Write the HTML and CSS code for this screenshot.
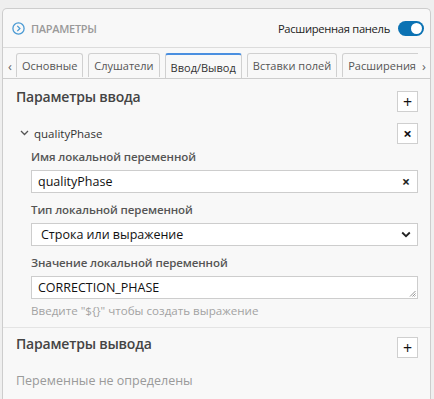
FILE: index.html
```html
<!DOCTYPE html>
<html lang="ru">
<head>
<meta charset="utf-8">
<link rel="stylesheet" href="styles.css">
</head>
<body>
<div class="panel">
  <div class="header">
    <svg class="hicon" width="13" height="13" viewBox="0 0 13 13"><circle cx="6.5" cy="6.5" r="5.6" fill="none" stroke="#4a9ad4" stroke-width="1.3"/><path d="M5.3 3.9 L7.9 6.5 L5.3 9.1" fill="none" stroke="#4a9ad4" stroke-width="1.3"/></svg>
    <span class="htitle">ПАРАМЕТРЫ</span>
    <span class="spacer"></span>
    <span class="hlabel">Расширенная панель</span>
    <span class="toggle"><span class="knob"></span></span>
  </div>
  <div class="tabs">
    <span class="arrow">‹</span>
    <div class="tablist">
      <span class="tab">Основные</span>
      <span class="tab">Слушатели</span>
      <span class="tab active">Ввод/Вывод</span>
      <span class="tab">Вставки полей</span>
      <span class="tab">Расширения</span>
    </div>
    <span class="arrow">›</span>
  </div>
  <div class="section">
    <div class="shead">
      <span class="stitle">Параметры ввода</span>
      <span class="btn">+</span>
    </div>
    <div class="item">
      <svg class="chev" width="9" height="6" viewBox="0 0 9 6"><path d="M1 1 L4.5 4.5 L8 1" fill="none" stroke="#555" stroke-width="1.3"/></svg>
      <span class="iname">qualityPhase</span>
      <span class="btn x">×</span>
    </div>
    <div class="fields">
      <div class="field">
        <label class="flabel">Имя локальной переменной</label>
        <div class="input"><span>qualityPhase</span><span class="clear">×</span></div>
      </div>
      <div class="field">
        <label class="flabel">Тип локальной переменной</label>
        <div class="select"><span>Строка или выражение</span>
          <svg width="10" height="7" viewBox="0 0 10 7"><path d="M1.2 1.5 L5 5.2 L8.8 1.5" fill="none" stroke="#222" stroke-width="1.8"/></svg>
        </div>
      </div>
      <div class="field">
        <label class="flabel">Значение локальной переменной</label>
        <div class="textarea"><span>CORRECTION_PHASE</span>
          <svg class="grip" width="7" height="7" viewBox="0 0 7 7"><path d="M6.5 1 L1 6.5 M6.5 3.5 L3.5 6.5 M6.5 5.5 L5.5 6.5" stroke="#888" stroke-width="0.9"/></svg>
        </div>
        <div class="hint">Введите "${}" чтобы создать выражение</div>
      </div>
    </div>
  </div>
  <div class="section out">
    <div class="shead">
      <span class="stitle">Параметры вывода</span>
      <span class="btn">+</span>
    </div>
    <div class="empty">Переменные не определены</div>
  </div>
</div>
</body>
</html>
```
FILE: styles.css
```css
* { box-sizing: border-box; }
html, body { margin: 0; height: 100%; overflow: hidden; }
body {
  background: #efefef;
  font-family: "Open Sans", "Noto Sans", sans-serif;
  font-size: 12.5px;
  color: #333;
}
.panel {
  margin: 8px 3px 0 2px;
  border: 1px solid #cdcdcd;
  border-bottom: none;
  border-radius: 5px 5px 0 0;
  background: #f8f8f8;
  height: 400px;
}
.header {
  height: 39px;
  display: flex;
  align-items: center;
  padding: 0 6px 0 9px;
  border-bottom: 1px solid #dcdcdc;
}
.hicon { display: block; margin-right: 6px; }
.htitle { color: #9a9a9a; font-size: 11px; font-weight: 600; letter-spacing: -0.3px; }
.spacer { flex: 1; }
.hlabel { color: #222; font-size: 11.2px; letter-spacing: -0.3px; margin-right: 8px; }
.toggle {
  width: 26px; height: 15px; border-radius: 8px; background: #0b72b3;
  position: relative; display: block;
}
.knob {
  position: absolute; right: 2px; top: 2px; width: 11px; height: 11px;
  border-radius: 50%; background: #fff;
}
.tabs {
  display: flex;
  align-items: flex-end;
  padding-top: 6px;
  border-bottom: 1px solid #cdcdcd;
  height: 31px;
}
.arrow { width: 13px; text-align: center; color: #666; font-size: 13px; line-height: 24px; padding-left: 1px; }
.arrow:last-child { width: 12px; padding-left: 0; }
.tablist { flex: 1; display: flex; gap: 5px; overflow: hidden; }
.tab {
  flex: none;
  height: 24px;
  line-height: 23px;
  padding: 0 5px;
  border: 1px solid #d0d0d0;
  border-bottom: none;
  border-radius: 3px 3px 0 0;
  color: #555;
  font-size: 11px;
  background: #f8f8f8;
}
.tab.active {
  height: 26px;
  line-height: 26px;
  border-top: 2px solid #4a8fe0;
  color: #333;
  margin-bottom: -1px;
  background: #f8f8f8;
}
.section { padding: 0 12px 0 13px; border-bottom: 1px solid #e4e4e4; }
.shead { display: flex; align-items: flex-start; justify-content: space-between; padding-top: 7px; height: 40px; }
.stitle { font-size: 14px; color: #444; font-weight: 600; letter-spacing: -0.2px; line-height: 22px; }
.btn {
  width: 21px; height: 21px; border: 1px solid #cfcfcf; background: #fff;
  display: flex; align-items: center; justify-content: center;
  font-size: 16px; color: #111; margin-top: 5px; line-height: 1;
}
.btn.x { font-size: 15px; font-weight: 700; margin-top: 0; }
.item { display: flex; align-items: center; height: 22px; padding-left: 4px; margin-top: 3px; }
.chev { margin-right: 5px; }
.iname { flex: 1; font-size: 11.5px; color: #333; }
.fields { padding-left: 15px; padding-top: 4px; }
.field { margin-bottom: 8px; }
.flabel { display: block; font-weight: 600; color: #555; font-size: 11.5px; letter-spacing: -0.1px; line-height: 18px; margin-bottom: 4px; }
.input, .select, .textarea {
  height: 23px; border: 1px solid #cdcdcd; background: #fff;
  display: flex; align-items: center; justify-content: space-between;
  color: #111; font-size: 12.5px;
}
.input { padding: 0 7px 0 6px; }
.clear { font-weight: 700; font-size: 14px; color: #222; }
.select { padding: 0 6px 0 9px; }
.textarea { position: relative; padding: 0 6px; }
.grip { position: absolute; right: 1px; bottom: 1px; }
.hint { color: #a3a3a3; font-size: 11.6px; margin-top: 4px; line-height: 16px; }
.out { border-bottom: none; padding-top: 0; }
.out .shead { height: 40px; padding-top: 5px; }
.out .btn { margin-top: 4px; }
.empty { color: #9a9a9a; font-size: 12.5px; padding-top: 4px; }
```
